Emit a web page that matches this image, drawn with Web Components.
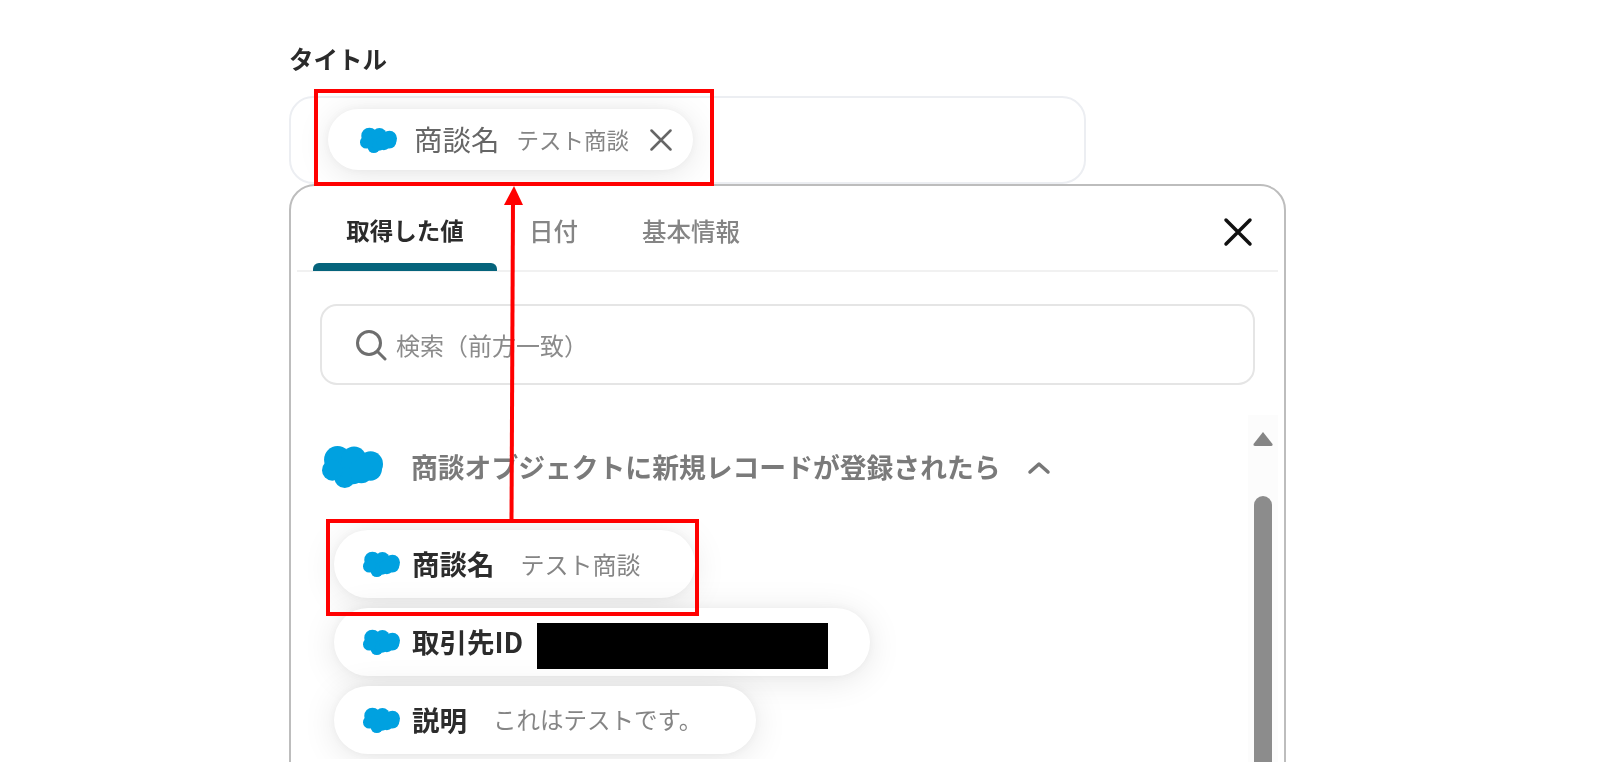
<!DOCTYPE html>
<html lang="ja">
<head>
<meta charset="utf-8">
<title>タイトル</title>
<style>
  html, body { margin: 0; height: 100%; overflow: hidden; background: #fff; }
  body { font-family: "Noto Sans CJK JP", "Noto Sans", sans-serif; color: #222; }
</style>
</head>
<body>

<template id="cloud_tpl">
  <style>
    :host { display: inline-block; width: 37px; height: 26px; line-height: 0; flex: none; }
    svg { width: 100%; height: 100%; display: block; fill: #00a1e0; }
  </style>
  <svg viewBox="0 0 59 41" preserveAspectRatio="none">
    <circle cx="15" cy="14" r="13"/>
    <circle cx="31" cy="13.5" r="12"/>
    <circle cx="47" cy="18" r="12"/>
    <circle cx="47" cy="23" r="11"/>
    <circle cx="22" cy="31" r="10"/>
    <circle cx="30" cy="27" r="10.5"/>
    <circle cx="38" cy="25" r="11.5"/>
    <circle cx="10" cy="24" r="10"/>
  </svg>
</template>

<template id="chip_tpl">
  <style>
    :host {
      --chip_height: 68px;
      --chip_left: 29px;
      --chip_right: 54px;
      --chip_gap: 12px;
      --label_size: 27.5px;
      --label_weight: 700;
      --label_color: #2c2c2c;
      --value_size: 24px;
      --value_gap: 26px;
      display: flex;
      width: max-content;
      align-items: center;
      height: var(--chip_height);
      padding: 0 var(--chip_right) 0 var(--chip_left);
      border-radius: 999px;
      background: #fff;
      box-shadow: 0 0 8px rgb(0 0 0 / 4%), 0 4px 34px rgb(0 0 0 / 10%);
    }
    .label {
      margin-left: var(--chip_gap);
      font-size: var(--label_size);
      font-weight: var(--label_weight);
      color: var(--label_color);
      line-height: 1;
    }
    .value {
      display: flex;
      align-items: center;
      margin-left: var(--value_gap);
      font-size: var(--value_size);
      color: #858585;
      line-height: 1;
    }
  </style>
  <x-cloud></x-cloud>
  <span class="label"><slot name="label"></slot></span>
  <span class="value"><slot></slot></span>
  <slot name="end"></slot>
</template>

<template id="field_tpl">
  <style>
    :host { display: block; padding-top: 35px; }
    .title {
      margin: 0 0 17px;
      height: 34px;
      font-size: 24.5px;
      font-weight: 700;
      line-height: 27px;
      padding-top: 10px;
      color: #2b2b2b;
    }
    .box {
      box-sizing: border-box;
      width: 797px;
      height: 88px;
      padding: 11px 37px;
      border: 2px solid #eceef2;
      border-radius: 24px;
      background: #fff;
    }
  </style>
  <div class="title"><slot name="title"></slot></div>
  <div class="box"><slot></slot></div>
</template>

<template id="tabs_tpl">
  <style>
    :host {
      display: flex;
      align-items: stretch;
      height: 84px;
      margin: 0 6px;
      padding-left: 16px;
      border-bottom: 2px solid #f1f1f1;
    }
    .close { margin: 8px 25px 0 auto; align-self: center; width: 30px; height: 30px; }
    svg { display: block; width: 100%; height: 100%; fill: none; stroke: #111; stroke-width: 3.5; stroke-linecap: round; }
  </style>
  <slot></slot>
  <div class="close">
    <svg viewBox="0 0 30 30"><path d="M3 3 L27 27 M27 3 L3 27"/></svg>
  </div>
</template>

<template id="tab_tpl">
  <style>
    :host {
      position: relative;
      display: flex;
      align-items: center;
      justify-content: center;
      box-sizing: border-box;
      padding: 4px 32px 0;
      font-size: 24.5px;
      font-weight: 500;
      color: #858585;
    }
    :host([active]) { width: 184px; padding: 4px 0 0; font-size: 23.5px; font-weight: 700; color: #2b2b2b; }
    :host([active])::after {
      content: '';
      position: absolute;
      left: 0;
      right: 0;
      bottom: -1px;
      height: 8px;
      border-radius: 6px 6px 0 0;
      background: #05647c;
    }
  </style>
  <slot></slot>
</template>

<template id="search_tpl">
  <style>
    :host {
      display: flex;
      align-items: center;
      box-sizing: border-box;
      height: 81px;
      margin: 32px 29px 0 29px;
      padding-left: 33px;
      border: 2px solid #e5e5e5;
      border-radius: 17px;
      font-size: 24px;
      color: #8b8b8b;
    }
    svg { width: 32px; height: 32px; margin-right: 9px; fill: none; stroke: #6e6e6e; stroke-width: 3; stroke-linecap: round; flex: none; }
  </style>
  <svg viewBox="0 0 32 32"><circle cx="14" cy="14" r="11.5"/><path d="M22.5 22.5 L30 30"/></svg>
  <slot></slot>
</template>

<template id="rail_tpl">
  <style>
    :host {
      display: block;
      flex: none;
      width: 30px;
      background: #fcfcfc;
      position: relative;
    }
    svg { display: block; margin: 16px auto 0; width: 20px; height: 15px; fill: #858585; }
    .thumb { width: 18px; height: 400px; margin: 50px auto 0; border-radius: 9px 9px 0 0; background: #8c8c8c; }
  </style>
  <svg viewBox="0 0 20 15"><path d="M10 1 L19.5 13 Q20 15 18 15 L2 15 Q0 15 .5 13 Z"/></svg>
  <div class="thumb"></div>
</template>

<template id="popup_tpl">
  <style>
    :host {
      display: block;
      box-sizing: border-box;
      width: 997px;
      height: 620px;
      border: 2px solid #bdbdbd;
      border-radius: 26px 26px 0 0;
      background: #fff;
    }
    .body { display: flex; margin: 30px 6px 0 0; height: 400px; }
    .list { flex: 1; min-width: 0; }
    .head {
      display: flex;
      align-items: center;
      height: 60px;
      margin-top: 21px;
      padding-left: 31px;
      font-size: 26.8px;
      font-weight: 700;
      color: #7a7a7a;
    }
    .head x-cloud { width: 61px; height: 43px; margin: 1px 28px 0 0; }
    .head svg { width: 24px; height: 14px; margin: 4px 0 0 26px; fill: none; stroke: #777; stroke-width: 3.5; stroke-linecap: round; stroke-linejoin: round; }
    /* the list clips its chips' shadows, top and bottom */
    .chips {
      display: flex;
      flex-direction: column;
      gap: 10px;
      height: 227px;
      margin-top: 23px;
      padding: 11px 0 2px 43px;
      overflow: hidden;
    }
  </style>
  <x-tabs><slot name="tab"></slot></x-tabs>
  <x-search><slot name="search"></slot></x-search>
  <div class="body">
    <div class="list">
      <div class="head">
        <x-cloud></x-cloud>
        <span><slot name="heading"></slot></span>
        <svg viewBox="0 0 24 14"><path d="M3 11 L12 3 L21 11"/></svg>
      </div>
      <div class="chips"><slot></slot></div>
    </div>
    <x-rail></x-rail>
  </div>
</template>

<template id="mark_tpl">
  <style>
    :host {
      position: absolute;
      box-sizing: border-box;
      border: 4px solid #f00;
      pointer-events: none;
    }
  </style>
</template>

<template id="page_tpl">
  <style>
    :host {
      display: block;
      position: relative;
      width: 1600px;
      height: 762px;
      overflow: hidden;
      filter: blur(.5px);
    }
    .column { padding-left: 289px; }
    .arrow { position: absolute; left: 0; top: 0; width: 1600px; height: 762px; pointer-events: none; }
  </style>
  <div class="column"><slot></slot></div>
  <x-mark style="left:314px;top:89px;width:400px;height:97px"></x-mark>
  <x-mark style="left:326px;top:519px;width:373px;height:97px"></x-mark>
  <svg class="arrow" viewBox="0 0 1600 762">
    <path d="M511.5 520 L513 200" stroke="#f00" stroke-width="4" fill="none"/>
    <path d="M514 186 L523 205 L504 205 Z" fill="#f00"/>
  </svg>
</template>

<x-page>
  <x-field>
    <span slot="title">タイトル</span>
    <x-chip style="--chip_height:61px;--chip_left:32px;--chip_right:21px;--chip_gap:17px;--label_size:28.5px;--label_weight:400;--label_color:#666;--value_size:22.5px;--value_gap:17px">
      <span slot="label">商談名</span>
      テスト商談
      <svg slot="end" width="22" height="22" viewBox="0 0 22 22" style="margin-left:21px;fill:none;stroke:#666;stroke-width:2.5;stroke-linecap:round"><path d="M1.5 1.5 L20.5 20.5 M20.5 1.5 L1.5 20.5"/></svg>
    </x-chip>
  </x-field>

  <x-popup>
    <x-tab slot="tab" active>取得した値</x-tab>
    <x-tab slot="tab">日付</x-tab>
    <x-tab slot="tab">基本情報</x-tab>
    <span slot="search">検索（前方一致）</span>
    <span slot="heading">商談オブジェクトに新規レコードが登録されたら</span>

    <x-chip>
      <span slot="label">商談名</span>
      テスト商談
    </x-chip>
    <x-chip style="--value_gap:14px;--chip_right:42px">
      <span slot="label">取引先ID</span>
      <span style="display:block;width:291px;height:46px;background:#000;margin-top:7px"></span>
    </x-chip>
    <x-chip style="--value_size:23.5px">
      <span slot="label">説明</span>
      これはテストです。
    </x-chip>
  </x-popup>
</x-page>

<script>
  // every element here is only a template in an open shadow root
  const plain = (name, template_id)=> {
    class Plain extends HTMLElement {
      constructor() {
        super();

        const shadow = this.attachShadow({ mode: 'open' });

        shadow.append(document.getElementById(template_id).content.cloneNode(true));
      }
    }

    customElements.get(name) || customElements.define(name, Plain);
  };

  plain('x-cloud', 'cloud_tpl');
  plain('x-chip', 'chip_tpl');
  plain('x-field', 'field_tpl');
  plain('x-tabs', 'tabs_tpl');
  plain('x-tab', 'tab_tpl');
  plain('x-search', 'search_tpl');
  plain('x-rail', 'rail_tpl');
  plain('x-popup', 'popup_tpl');
  plain('x-mark', 'mark_tpl');
  plain('x-page', 'page_tpl');
</script>
</body>
</html>
